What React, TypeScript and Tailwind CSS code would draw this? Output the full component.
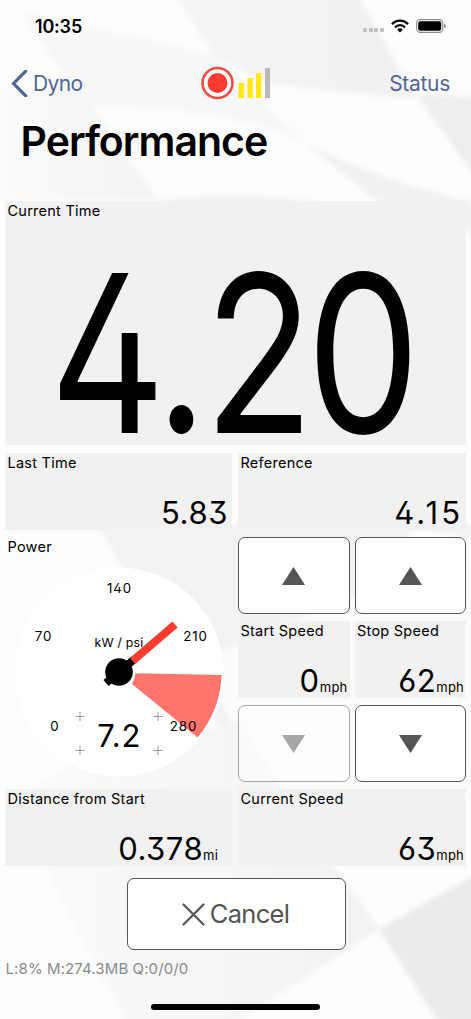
import { clsx } from "clsx";

type ReadoutProps = {
  label: string;
  value: string;
  unit?: string;
  valueClass?: string;
};

function Backdrop() {
  return (
    <svg
      className="absolute inset-0 h-full w-full"
      viewBox="0 0 471 1019"
      preserveAspectRatio="none"
      aria-hidden="true"
    >
      <defs>
        <filter id="soft" x="-10%" y="-10%" width="120%" height="120%">
          <feGaussianBlur stdDeviation="2.5" />
        </filter>
        <linearGradient id="flag" x1="0" y1="0" x2="1" y2="0">
          <stop offset="0" stopColor="#f5f5f5" />
          <stop offset="1" stopColor="#f0f0f0" />
        </linearGradient>
        <linearGradient id="fade" x1="0" y1="0" x2="1" y2="0">
          <stop offset="0" stopColor="#fbfbfb" />
          <stop offset="1" stopColor="#f3f3f3" />
        </linearGradient>
        <linearGradient id="floor" x1="0" y1="0" x2="1" y2="0">
          <stop offset="0" stopColor="#fafafa" />
          <stop offset="1" stopColor="#f2f2f2" />
        </linearGradient>
      </defs>
      <rect width="471" height="1019" fill="#fdfdfd" />
      <g filter="url(#soft)">
        <path d="M172 -10 H355 L416 98 C370 96 320 90 265 83 L214 56 Z" fill="url(#flag)" />
        <path d="M20 12 C90 28 150 38 214 56 L265 103 C190 86 110 88 72 88 Z" fill="#f7f7f7" />
        <path d="M-10 88 H80 L158 200 H-10 Z" fill="url(#fade)" />
        <path d="M72 88 C150 88 210 94 265 103 L305 142 C240 112 160 108 92 106 Z" fill="#f7f7f7" />
        <path d="M305 142 C350 168 420 190 480 204 V235 L375 200 Z" fill="#f1f1f1" />
        <path d="M416 94 L480 98 V184 Z" fill="#eeeeee" />
        <path d="M158 200 C200 192 270 192 330 204 L380 230 H158 Z" fill="#f4f4f4" />
        <path d="M98 525 H480 V540 L414 528 L345 620 L225 650 L240 760 L122 567 Z" fill="#f2f2f2" />
        <path d="M222 650 L345 600 L480 560 V800 H282 L232 722 L210 690 Z" fill="#fbfbfb" />
        <path d="M20 795 L80 760 L240 722 L282 790 L333 864 L379 929 L225 1030 H130 L45 866 Z" fill="url(#floor)" />
        <path d="M379 929 L480 872 V1030 H443 Z" fill="#ebebeb" />
      </g>
    </svg>
  );
}

function StatusBar() {
  return (
    <div className="flex h-[52px] items-center justify-between pl-[35px] pr-[25px]">
      <span className="pt-px text-[18px] leading-none font-semibold tracking-[-0.2px]">10:35</span>
      <div className="flex items-center">
        <div className="mt-2 mr-[7px] flex gap-[1.6px]">
          {[0, 1, 2, 3].map((dot) => (
            <span key={dot} className="h-1 w-1 rounded-[1px] bg-[#bfbfbf]" />
          ))}
        </div>
        <svg width="18" height="14" viewBox="0 0 18 14" fill="none" stroke="#000" strokeWidth="2.4">
          <path d="M1 5.2 C5.4 0.4 12.6 0.4 17 5.2" />
          <path d="M4 8.4 C6.8 5.4 11.2 5.4 14 8.4" />
          <path d="M6.2 10.5 C7.7 8.9 10.3 8.9 11.8 10.5 L9 13.5 Z" fill="#000" stroke="none" />
        </svg>
        <svg className="ml-[7px]" width="30" height="14" viewBox="0 0 30 14">
          <rect x="0.6" y="0.6" width="26.2" height="12.8" rx="3.6" fill="#fff" stroke="#8c8c8c" strokeWidth="1.1" />
          <rect x="2.2" y="2.2" width="23" height="9.6" rx="2" fill="#000" />
          <path d="M28 4.8 C30.2 5.4 30.2 8.6 28 9.2 Z" fill="#8c8c8c" />
        </svg>
      </div>
    </div>
  );
}

function NavBar() {
  return (
    <div className="grid h-[62px] grid-cols-[1fr_auto_1fr] items-center pr-[21px] pl-[11px] text-[21px] text-[#52659a]">
      <div className="flex items-center gap-[5px]">
        <svg width="17" height="27" viewBox="0 0 17 27" fill="none" stroke="#52659a" strokeWidth="3.2">
          <path d="M14.7 1.2 L2.6 13.5 L14.7 25.8" strokeLinecap="round" />
        </svg>
        <span className="pt-px tracking-[-0.6px]">Dyno</span>
      </div>
      <svg className="mr-[-10px]" width="70" height="34" viewBox="0 0 70 34">
        <circle cx="16.5" cy="17" r="15" fill="#fff" stroke="#f44a42" strokeWidth="2.6" />
        <circle cx="16.5" cy="17" r="10" fill="#ff3b30" />
        <rect x="37.5" y="17" width="5.5" height="15" fill="#ffe815" />
        <rect x="46.5" y="12" width="5.3" height="20" fill="#ffe815" />
        <rect x="55" y="7" width="5.3" height="25" fill="#ffe815" />
        <rect x="64" y="2" width="5" height="30" fill="#b9b7b8" />
      </svg>
      <span className="justify-self-end pt-px tracking-[-0.3px]">Status</span>
    </div>
  );
}

function Readout({ label, value, unit, valueClass }: ReadoutProps) {
  return (
    <div className="flex flex-col justify-between bg-[#f1f1f1]">
      <span className="pt-[2px] pl-[2.5px] text-[14.5px] leading-[16px] tracking-[0.25px] whitespace-nowrap">{label}</span>
      <div className={clsx("flex items-baseline justify-end pb-[2px] leading-[30px]", valueClass)}>
        <span className="text-[31px]">{value}</span>
        {unit && <span className="text-[13px] leading-none tracking-[0.2px]">{unit}</span>}
      </div>
    </div>
  );
}

function StepButton({ direction, disabled }: { direction: "up" | "down"; disabled?: boolean }) {
  return (
    <button
      disabled={disabled}
      aria-label={direction}
      className={clsx(
        "flex items-center justify-center rounded-[7px] border-[1.5px] border-[#555] bg-white",
        disabled && "opacity-50"
      )}
    >
      <svg width="23" height="18" viewBox="0 0 23 18" fill="#555">
        <path d={direction === "up" ? "M11.5 0 L23 18 H0 Z" : "M0 0 H23 L11.5 18 Z"} />
      </svg>
    </button>
  );
}

const ticks = [
  { text: "0", x: 50, y: 194 },
  { text: "70", x: 38.5, y: 104 },
  { text: "140", x: 114.5, y: 56 },
  { text: "210", x: 190.5, y: 104 },
  { text: "280", x: 178.5, y: 194 },
];

function PowerGauge() {
  return (
    <svg width="227" height="245" viewBox="0 0 227 245">
      <circle cx="114" cy="135" r="104.5" fill="#fff" />
      <path d="M130.5 136.2 L216.5 138 A103 103 0 0 1 192.5 200.5 L127 147 Q130 142 130.5 136.2 Z" fill="#ff756e" />
      <text x="2.5" y="15" fontSize="14.5" letterSpacing="0.25">Power</text>
      <g fontSize="13.3" letterSpacing="0.9" textAnchor="middle">
        {ticks.map((tick) => (
          <text key={tick.text} x={tick.x} y={tick.y}>{tick.text}</text>
        ))}
      </g>
      <text x="114" y="110" fontSize="12.3" letterSpacing="0.2" textAnchor="middle">kW / psi</text>
      <path d="M101 146 L129 122.5" stroke="#000" strokeWidth="8" />
      <path d="M127.5 124 L170 87.5" stroke="#ff3b30" strokeWidth="8" />
      <circle cx="114" cy="135" r="13.8" />
      <path
        d="M70.5 179.5 h9 M75 175 v9 M148.5 179.5 h9 M153 175 v9 M70.5 213.5 h9 M75 209 v9 M148.5 213.5 h9 M153 209 v9"
        stroke="#999"
        fill="none"
      />
      <text x="114.3" y="209.5" fontSize="31" letterSpacing="0.9" textAnchor="middle">7.2</text>
    </svg>
  );
}

export default function App() {
  return (
    <div className="relative h-[1019px] w-[471px] overflow-hidden font-['Inter',sans-serif] text-black">
      <Backdrop />
      <div className="relative flex h-full flex-col">
        <StatusBar />
        <NavBar />
        <h1 className="h-[87px] pt-[3px] pl-[20.5px] text-[41px] leading-[48px] font-semibold tracking-[-1px]">Performance</h1>

        <main className="flex flex-col gap-[7.5px] px-[5px] [font-feature-settings:'ss01','cv02','cv03']">
          <section className="flex h-[244px] flex-col bg-[#f1f1f1]">
            <span className="pt-[2px] pl-[2.5px] text-[14.5px] leading-[16px] tracking-[0.25px]">Current Time</span>
            <svg className="flex-1 overflow-visible" width="461" height="226" viewBox="0 0 461 226">
              <text x="44.5 150.5 199 301.5" transform="translate(0 213.5) scale(1 1.22)" fontSize="180">
                4.20
              </text>
            </svg>
          </section>

          <section className="grid h-[77px] grid-cols-[227px_228px] gap-x-1.5">
            <Readout label="Last Time" value="5.83" valueClass="pr-[4px] tracking-[0.6px]" />
            <Readout label="Reference" value="4.15" valueClass="pr-[3px] tracking-[3px]" />
          </section>

          <section className="grid h-[244px] grid-cols-[227px_228px] gap-x-1.5">
            <PowerGauge />
            <div className="grid grid-cols-2 grid-rows-[77px_77px_77px] gap-x-[5px] gap-y-[7px]">
              <StepButton direction="up" />
              <StepButton direction="up" />
              <Readout label="Start Speed" value="0" unit="mph" valueClass="pr-[2px] tracking-[0.8px]" />
              <Readout label="Stop Speed" value="62" unit="mph" valueClass="pr-[2px] tracking-[0.6px]" />
              <StepButton direction="down" disabled />
              <StepButton direction="down" />
            </div>
          </section>

          <section className="grid h-[77px] grid-cols-[227px_228px] gap-x-1.5">
            <Readout label="Distance from Start" value="0.378" unit="mi" valueClass="pr-[14px] tracking-[0.5px]" />
            <Readout label="Current Speed" value="63" unit="mph" valueClass="pr-[2px] tracking-[0.6px]" />
          </section>
        </main>

        <button className="mt-[12px] ml-[127px] flex h-[72px] w-[219px] items-center justify-center gap-[5px] rounded-[7px] border-[1.5px] border-[#555] bg-white pt-px pr-[2px] text-[25.5px] tracking-[-0.7px] text-[#555]">
          <svg width="23" height="23" viewBox="0 0 23 23" fill="none" stroke="#555" strokeWidth="2.2" strokeLinecap="round">
            <path d="M1.5 1.5 L21.5 21.5 M21.5 1.5 L1.5 21.5" />
          </svg>
          Cancel
        </button>
        <p className="mt-[10px] pl-[5.5px] text-[15px] leading-[18px] tracking-[0.1px] text-[#8a8a8a]">L:8% M:274.3MB Q:0/0/0</p>
        <div className="mt-auto mb-[9px] h-[6px] w-[169px] self-center rounded-full bg-black" />
      </div>
    </div>
  );
}
